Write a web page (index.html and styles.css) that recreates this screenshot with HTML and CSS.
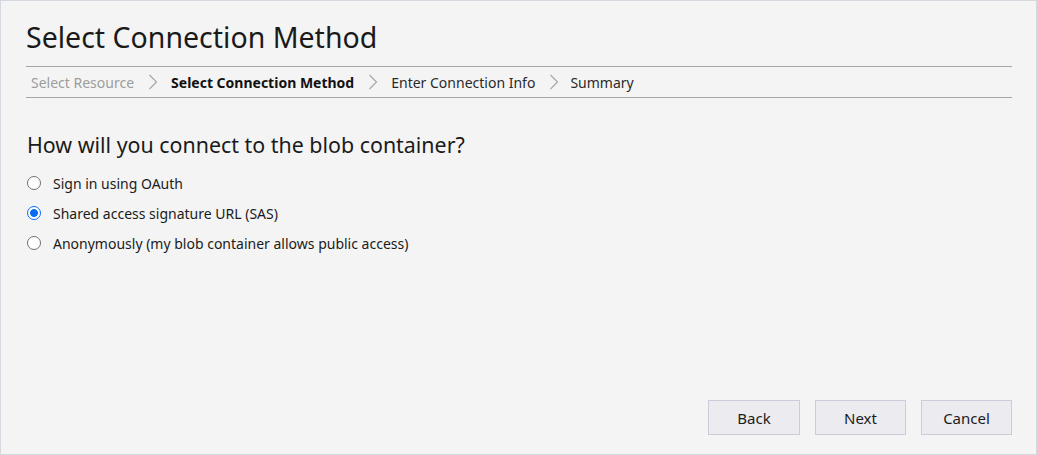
FILE: index.html
```html
<!DOCTYPE html>
<html>
<head>
<meta charset="utf-8">
<link rel="stylesheet" href="styles.css">
</head>
<body>
<div class="window">
  <h1 class="title">Select Connection Method</h1>
  <nav class="crumbs">
    <span class="crumb done">Select Resource</span>
    <svg class="chev" width="10" height="16" viewBox="0 0 10 16"><path d="M1.5 1 L8.5 8 L1.5 15" fill="none" stroke="#a8a8a8" stroke-width="1.2"/></svg>
    <span class="crumb current">Select Connection Method</span>
    <svg class="chev" width="10" height="16" viewBox="0 0 10 16"><path d="M1.5 1 L8.5 8 L1.5 15" fill="none" stroke="#a8a8a8" stroke-width="1.2"/></svg>
    <span class="crumb">Enter Connection Info</span>
    <svg class="chev last" width="10" height="16" viewBox="0 0 10 16"><path d="M1.5 1 L8.5 8 L1.5 15" fill="none" stroke="#a8a8a8" stroke-width="1.2"/></svg>
    <span class="crumb">Summary</span>
  </nav>
  <h2 class="question">How will you connect to the blob container?</h2>
  <div class="options">
    <label class="option"><span class="radio"></span><span>Sign in using OAuth</span></label>
    <label class="option"><span class="radio checked"></span><span>Shared access signature URL (SAS)</span></label>
    <label class="option"><span class="radio"></span><span>Anonymously (my blob container allows public access)</span></label>
  </div>
  <div class="spacer"></div>
  <div class="buttons">
    <button class="btn">Back</button>
    <button class="btn">Next</button>
    <button class="btn">Cancel</button>
  </div>
</div>
</body>
</html>
```
FILE: styles.css
```css
html, body {
  margin: 0;
  padding: 0;
  background: #f4f4f4;
}
.window {
  box-sizing: border-box;
  width: 1037px;
  height: 455px;
  border: 1px solid #d3d9de;
  background: #f4f4f4;
  display: flex;
  flex-direction: column;
  padding: 0 24px 19px 25px;
  font-family: "Noto Sans", sans-serif;
  color: #1b1b1b;
}
.title {
  margin: 17px 0 0 0;
  font-size: 28.5px;
  font-weight: 400;
  line-height: 38px;
  color: #1a1a1a;
  height: 48px;
}
.crumbs {
  border-top: 1px solid #a6a6a6;
  border-bottom: 1px solid #a6a6a6;
  height: 30px;
  display: flex;
  align-items: center;
  padding-left: 5px;
  font-size: 14px;
}
.crumb { color: #2a2a2a; }
.crumb.done { color: #9c9c9c; }
.crumb.current { font-weight: 700; color: #111; }
.chev { margin: 0 13px 0 14px; }
.chev.last { margin-right: 11px; }
.question {
  margin: 33px 0 0 1px;
  font-size: 21.4px;
  font-weight: 400;
  line-height: 28px;
  color: #1b1b1b;
}
.options {
  margin-top: 9px;
  display: flex;
  flex-direction: column;
  padding-left: 1px;
}
.option {
  display: flex;
  align-items: center;
  height: 30px;
  font-size: 14px;
  color: #1b1b1b;
}
.radio {
  box-sizing: border-box;
  width: 14px;
  height: 14px;
  border-radius: 50%;
  border: 1px solid #707070;
  background: #fff;
  margin-right: 12px;
  flex: none;
}
.radio.checked {
  border: 1.5px solid #0a6cf5;
  background: radial-gradient(circle, #0a6cf5 0 3.6px, #fff 4.2px);
}
.spacer { flex: 1; }
.buttons {
  display: flex;
  justify-content: flex-end;
  gap: 15px;
}
.btn {
  box-sizing: border-box;
  width: 91px;
  height: 35px;
  background: #ebebf0;
  border: 1px solid #cbcbdb;
  border-radius: 0;
  font-family: inherit;
  font-size: 15px;
  color: #1b1b1b;
}
.btn:first-child { width: 92px; }
```
